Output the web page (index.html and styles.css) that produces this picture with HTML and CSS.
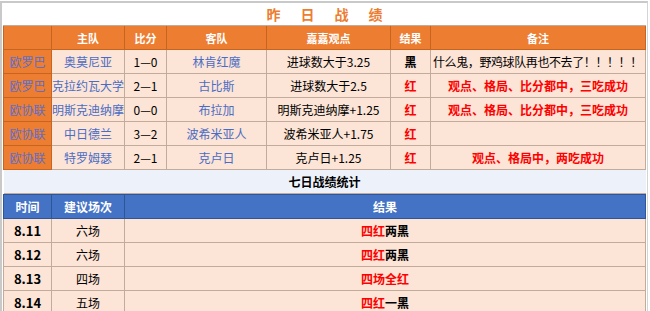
FILE: index.html
```html
<!DOCTYPE html>
<html lang="zh">
<head>
<meta charset="utf-8">
<link rel="stylesheet" href="styles.css">
</head>
<body>
<div class="frame">
  <table class="t1">
    <colgroup>
      <col class="c1"><col class="c2"><col class="c3"><col class="c4"><col class="c5"><col class="c6"><col class="c7">
    </colgroup>
    <tr class="title"><td colspan="7">昨日战绩</td></tr>
    <tr class="head">
      <th></th><th>主队</th><th>比分</th><th>客队</th><th>嘉嘉观点</th><th>结果</th><th>备注</th>
    </tr>
    <tr>
      <td class="lg">欧罗巴</td><td class="team">奥莫尼亚</td><td>1—0</td><td class="team">林肯红魔</td><td>进球数大于3.25</td><td class="black">黑</td><td class="note">什么鬼，野鸡球队再也不去了！！！！！</td>
    </tr>
    <tr>
      <td class="lg">欧罗巴</td><td class="team">克拉约瓦大学</td><td>2—1</td><td class="team">古比斯</td><td>进球数大于2.5</td><td class="red">红</td><td class="red">观点、格局、比分都中，三吃成功</td>
    </tr>
    <tr>
      <td class="lg">欧协联</td><td class="team">明斯克迪纳摩</td><td>0—0</td><td class="team">布拉加</td><td>明斯克迪纳摩+1.25</td><td class="red">红</td><td class="red">观点、格局、比分都中，三吃成功</td>
    </tr>
    <tr>
      <td class="lg">欧协联</td><td class="team">中日德兰</td><td>3—2</td><td class="team">波希米亚人</td><td>波希米亚人+1.75</td><td class="red">红</td><td></td>
    </tr>
    <tr>
      <td class="lg">欧协联</td><td class="team">特罗姆瑟</td><td>2—1</td><td class="team">克卢日</td><td>克卢日+1.25</td><td class="red">红</td><td class="red">观点、格局中，两吃成功</td>
    </tr>
    <tr class="sub"><td colspan="7">七日战绩统计</td></tr>
  </table>
  <table class="t2">
    <colgroup>
      <col class="c1"><col class="c2"><col class="cr">
    </colgroup>
    <tr class="bhead"><th>时间</th><th>建议场次</th><th>结果</th></tr>
    <tr><td class="date">8.11</td><td>六场</td><td class="res"><span class="r">四红</span>两黑</td></tr>
    <tr><td class="date">8.12</td><td>六场</td><td class="res"><span class="r">四红</span>两黑</td></tr>
    <tr><td class="date">8.13</td><td>四场</td><td class="res"><span class="r">四场全红</span></td></tr>
    <tr><td class="date">8.14</td><td>五场</td><td class="res"><span class="r">四红</span>一黑</td></tr>
  </table>
</div>
</body>
</html>
```
FILE: styles.css
```css
html, body {
  margin: 0;
  padding: 0;
  background: #ffffff;
}
body {
  font-family: "Noto Sans CJK SC", "Noto Sans", sans-serif;
  font-size: 12px;
  color: #000;
}
.frame {
  margin-top: 1px;
  width: 643px;
  border-top: 2px solid #c9c9c9;
  border-left: 2px solid #c9c9c9;
  border-right: 1px solid #d4d4d4;
  padding-left: 1px;
  padding-right: 1px;
}
table {
  border-collapse: collapse;
  table-layout: fixed;
  width: 642px;
}
.c1 { width: 48px; }
.c2 { width: 73px; }
.c3 { width: 42px; }
.c4 { width: 100px; }
.c5 { width: 124px; }
.c6 { width: 40px; }
.c7 { width: 215px; }
.cr { width: 521px; }
td, th {
  height: 23px;
  padding: 0;
  text-align: center;
  white-space: nowrap;
  overflow: hidden;
  border: 1px solid #c3ab9b;
  background: #fce4d6;
  line-height: 22px;
}
.title td {
  height: 22px;
  background: #ffffff;
  color: #ed7d31;
  font-weight: bold;
  font-size: 14px;
  letter-spacing: 20px;
  border: none;
  border-bottom: 1px solid #c3ab9b;
  padding-left: 20px;
}
.head th {
  background: #ed7d31;
  color: #fff;
  font-size: 11px;
  font-weight: bold;
  border-color: #c5651f;
}
.lg {
  background: #ed7d31;
  color: #5b6fc8;
  border-color: #c5651f;
}
.team {
  color: #4a6cc4;
}
.black {
  font-weight: bold;
}
.red {
  color: #ff0000;
  font-weight: bold;
}
.note {
  text-align: left;
  padding-left: 2px;
  letter-spacing: -0.4px;
  overflow: visible;
}
.sub td {
  background: #edf2fa;
  font-weight: bold;
  font-size: 12px;
  border-left: none;
  border-right: none;
}
.bhead th {
  background: #4472c4;
  color: #fff;
  font-weight: bold;
  font-size: 12px;
  border-color: #2f5597;
}
.date {
  font-weight: bold;
  font-size: 13px;
}
.res {
  font-weight: bold;
}
.r {
  color: #ff0000;
}
```
